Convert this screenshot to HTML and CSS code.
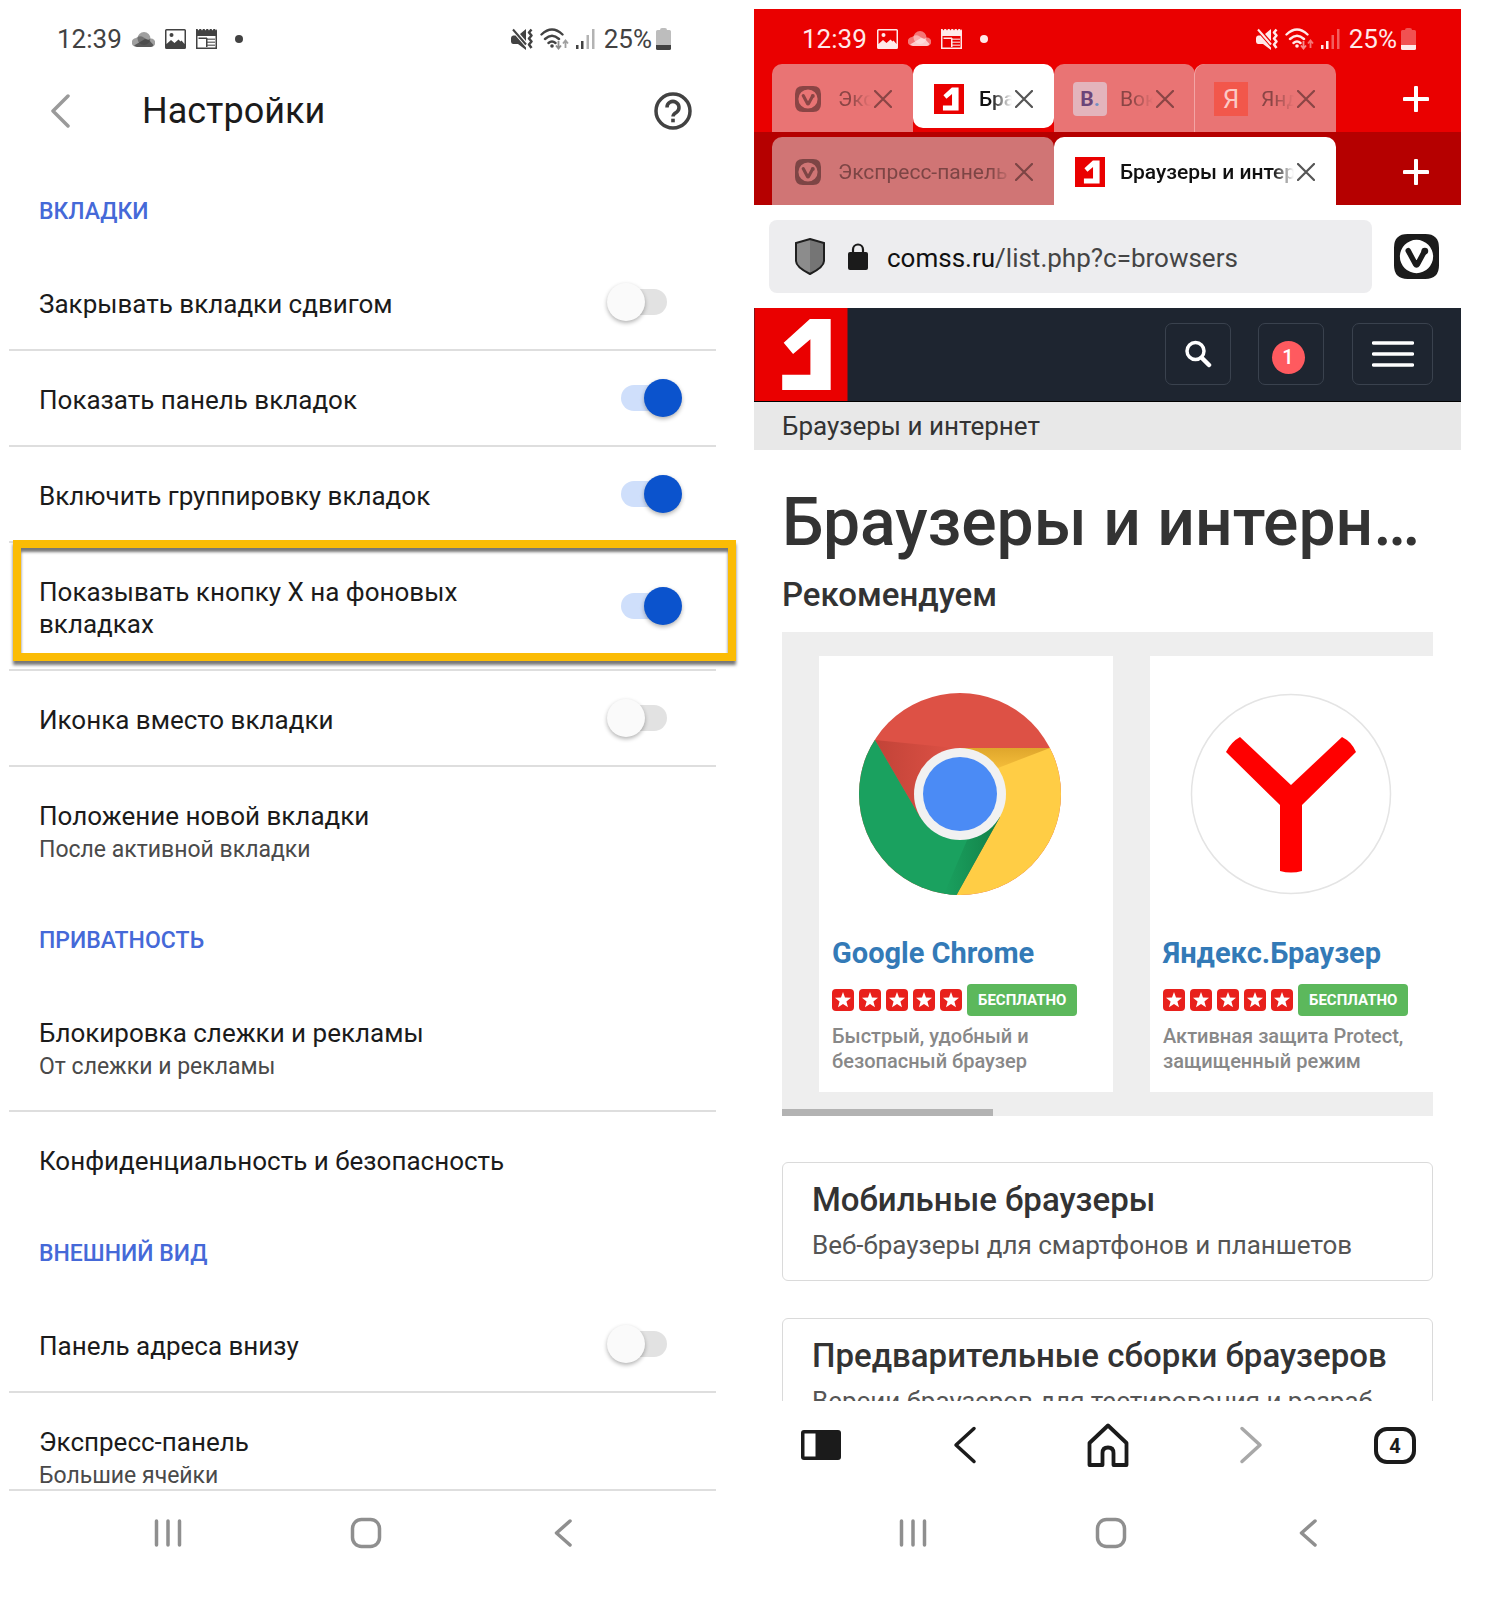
FILE: index.html
```html
<!DOCTYPE html>
<html lang="ru">
<head>
  <meta charset="UTF-8">
  <meta name="viewport" content="width=device-width, initial-scale=1.0">
  <title>Настройки вкладок</title>
  <link rel="stylesheet" href="styles.css">
</head>
<body>

<!-- shared icons -->
<svg class="sprite" aria-hidden="true">
  <symbol id="i-cloud" viewBox="0 0 23 15">
    <circle cx="12" cy="6.500" r="6.500" opacity=".5"/>
    <path d="M4.500 15A4.500 4.500 0 0 1 4 6a6 6 0 0 1 6-1.500L16 8a4 4 0 0 1 3-1.500A4.200 4.200 0 0 1 19 15z" opacity=".5"/>
    <path d="M2 13.500l11-6.500 4 1 4.500 5A4 4 0 0 1 19 15H5z" opacity=".75"/>
  </symbol>
  <symbol id="i-image" viewBox="0 0 21 20">
    <path fill-rule="evenodd" d="M1.500 0h18A1.500 1.500 0 0 1 21 1.500v17a1.500 1.500 0 0 1-1.500 1.500h-18A1.500 1.500 0 0 1 0 18.500v-17A1.500 1.500 0 0 1 1.500 0zM1.500 1.500V15L6 11l3.500 3 4-3.500 2 2 1-1L19.500 15V1.500z"/>
    <circle cx="6.500" cy="6" r="2"/>
  </symbol>
  <symbol id="i-news" viewBox="0 0 21 20">
    <path fill-rule="evenodd" d="M0 0h1.500l1 1.500 1-1.500H5l1 1.500L7 0h1.500l1 1.500 1-1.500H12l1 1.500L14 0h1.500l1 1.500 1-1.500H19l1 1.500 1-1.500v20H0zM1.500 7v11.500h18V7z"/>
    <path d="M2.500 8.500H11V10H2.500zM10 9h1.500v9H10z"/>
    <path d="M11 9.500h8V11h-8zM11 12.500h8V14h-8zM11 15.500h8V17h-8z" opacity=".7"/>
  </symbol>
  <symbol id="i-mute" viewBox="0 0 22 22">
    <path d="M0 10q0-2 2-2.500h2.500L15 19.500V22L7 16H2q-2-.5-2-2.500zM9 6l6-5v12z"/>
    <path d="M2 1.500l13 15" stroke="currentColor" stroke-width="2"/>
    <path d="M20.500 1.500l-2.500 3 2.500 3-2.500 3 2.500 3-2.500 3 2.500 3.500" fill="none" stroke="currentColor" stroke-width="2.500" stroke-linejoin="round"/>
  </symbol>
  <symbol id="i-wifi" viewBox="0 0 29 22">
    <g fill="none" stroke="currentColor" stroke-width="2.400" stroke-linecap="round">
      <path d="M1.500 6.500q10.500-10 21 0M5 11q7-6.500 14 0M8.500 15q3.500-3 7 0"/>
    </g>
    <circle cx="12" cy="18" r="1.800"/>
    <path d="M18.500 13v7M16 17.500l2.500 3 2.500-3" fill="none" stroke="currentColor" stroke-width="1.800" opacity=".6"/>
    <path d="M25.500 20v-7M23 15.500l2.500-3 2.500 3" fill="none" stroke="currentColor" stroke-width="1.800" opacity=".5"/>
  </symbol>
  <symbol id="i-signal" viewBox="0 0 19 20">
    <path d="M0 16h2.500v4H0zM5 12h2.500v8H5z"/>
    <path d="M10.500 6H13v14h-2.500zM16 0h2.500v20H16z" opacity=".4"/>
  </symbol>
  <symbol id="i-battery" viewBox="0 0 15 22">
    <path d="M4 2q0-2 2-2h3q2 0 2 2h2.500q1.500 0 1.500 1.500V17H0V3.500Q0 2 1.500 2z" opacity=".35"/>
    <path d="M0 17h15v3.500q0 1.500-1.500 1.500h-12Q0 22 0 20.500z"/>
  </symbol>
  <symbol id="i-vivaldi" viewBox="0 0 46 46">
    <path fill-rule="evenodd" d="M14 0h18Q46 0 46 14v18Q46 46 32 46H14Q0 46 0 32V14Q0 0 14 0zm9 6a17 17 0 1 0 0 34 17 17 0 0 0 0-34z"/>
    <path d="M14.500 17l7.500 14q1 1.500 2 0l7-13" fill="none" stroke="currentColor" stroke-width="5.500" stroke-linecap="round" stroke-linejoin="round"/>
    <circle cx="31.500" cy="17.500" r="3.500"/>
  </symbol>
  <symbol id="i-comss" viewBox="0 0 94 94">
    <rect width="94" height="94" fill="#ea0000"/>
    <path fill="#fff" d="M56 11h21v72H28V67.500h28.500V31.500L39 46.500 29.500 35z"/>
  </symbol>
  <symbol id="i-close" viewBox="0 0 18 18">
    <path d="M1 1l16 16M17 1L1 17" fill="none" stroke="currentColor" stroke-width="2.200" stroke-linecap="round"/>
  </symbol>
  <symbol id="i-plus" viewBox="0 0 26 26">
    <path d="M13 1.500v23M1.500 13h23" fill="none" stroke="currentColor" stroke-width="4" stroke-linecap="round"/>
  </symbol>
  <symbol id="i-recents" viewBox="0 0 32 32">
    <path d="M4.500 4v24M16 4v24M27.500 4v24" fill="none" stroke="currentColor" stroke-width="3.500" stroke-linecap="round"/>
  </symbol>
  <symbol id="i-home" viewBox="0 0 32 32">
    <rect x="2.500" y="2.500" width="27" height="27" rx="9" fill="none" stroke="currentColor" stroke-width="3.500"/>
  </symbol>
  <symbol id="i-back" viewBox="0 0 32 32">
    <path d="M23 4L9.500 16 23 28" fill="none" stroke="currentColor" stroke-width="3.500" stroke-linecap="round" stroke-linejoin="round"/>
  </symbol>
  <symbol id="i-star" viewBox="0 0 22 22">
    <rect width="22" height="22" rx="4" fill="#e8201c"/>
    <path fill="#fff" d="M11 3l2 5.500 6 .3-4.600 3.700 1.600 5.700-5-3.300-5 3.300 1.600-5.700L3 8.800l6-.3z"/>
  </symbol>
</svg>

<div class="phones">

  <section class="phone settings">
    <div class="status">
      <span class="status-time">12:39</span>
      <svg width="23" height="15"><use href="#i-cloud"/></svg>
      <svg width="21" height="20"><use href="#i-image"/></svg>
      <svg width="21" height="20"><use href="#i-news"/></svg>
      <span class="status-dot"></span>
      <span class="status-right">
        <svg width="22" height="22"><use href="#i-mute"/></svg>
        <svg width="29" height="22"><use href="#i-wifi"/></svg>
        <svg width="19" height="20"><use href="#i-signal"/></svg>
        <span class="status-charge">25%</span>
        <svg width="15" height="22"><use href="#i-battery"/></svg>
      </span>
    </div>

    <header class="head">
      <button class="head-back" aria-label="Назад">
        <svg width="20" height="34" viewBox="0 0 20 34"><path d="M18 2L3 17l15 15" fill="none" stroke="#9a9a9a" stroke-width="3.500" stroke-linecap="round" stroke-linejoin="round"/></svg>
      </button>
      <h1 class="head-title">Настройки</h1>
      <button class="head-help" aria-label="Справка">
        <svg width="38" height="38" viewBox="0 0 38 38">
          <g fill="none" stroke="#424242">
            <circle cx="19" cy="19" r="17" stroke-width="3.500"/>
            <path d="M13 15.500a6 6 0 1 1 9.500 4.800Q19 22.500 19 24.500" stroke-width="3.500"/>
            <path d="M17.200 28.500h3.600" stroke-width="3.600"/>
          </g>
        </svg>
      </button>
    </header>

    <div class="list">
      <h2 class="group">ВКЛАДКИ</h2>
      <label class="row">
        <span class="row-text">Закрывать вкладки сдвигом</span>
        <input class="switch" type="checkbox">
      </label>
      <label class="row">
        <span class="row-text">Показать панель вкладок</span>
        <input class="switch" type="checkbox" checked>
      </label>
      <label class="row">
        <span class="row-text">Включить группировку вкладок</span>
        <input class="switch" type="checkbox" checked>
      </label>
      <label class="row marked">
        <span class="row-text">Показывать кнопку X на фоновых вкладках</span>
        <input class="switch" type="checkbox" checked>
      </label>
      <label class="row">
        <span class="row-text">Иконка вместо вкладки</span>
        <input class="switch" type="checkbox">
      </label>
      <a href="#" class="row last">
        <span class="row-text">Положение новой вкладки<small>После активной вкладки</small></span>
      </a>

      <h2 class="group">ПРИВАТНОСТЬ</h2>
      <a href="#" class="row">
        <span class="row-text">Блокировка слежки и рекламы<small>От слежки и рекламы</small></span>
      </a>
      <a href="#" class="row last">
        <span class="row-text">Конфиденциальность и безопасность</span>
      </a>

      <h2 class="group">ВНЕШНИЙ ВИД</h2>
      <label class="row">
        <span class="row-text">Панель адреса внизу</span>
        <input class="switch" type="checkbox">
      </label>
      <a href="#" class="row">
        <span class="row-text">Экспресс-панель<small>Большие ячейки</small></span>
      </a>
    </div>

    <nav class="sysnav">
      <button aria-label="Недавние"><svg width="32" height="32"><use href="#i-recents"/></svg></button>
      <button aria-label="Домой"><svg width="32" height="32"><use href="#i-home"/></svg></button>
      <button aria-label="Назад"><svg width="32" height="32"><use href="#i-back"/></svg></button>
    </nav>
  </section>

  <section class="phone browser">
    <div class="status status-red">
      <span class="status-time">12:39</span>
      <svg width="21" height="20"><use href="#i-image"/></svg>
      <svg width="23" height="15"><use href="#i-cloud"/></svg>
      <svg width="21" height="20"><use href="#i-news"/></svg>
      <span class="status-dot"></span>
      <span class="status-right">
        <svg width="22" height="22"><use href="#i-mute"/></svg>
        <svg width="29" height="22"><use href="#i-wifi"/></svg>
        <svg width="19" height="20"><use href="#i-signal"/></svg>
        <span class="status-charge">25%</span>
        <svg width="15" height="22"><use href="#i-battery"/></svg>
      </span>
    </div>

    <div class="tabs">
      <div class="tab">
        <span class="fav"><svg width="26" height="26"><use href="#i-vivaldi"/></svg></span>
        <span class="tab-title">Экспресс-панель</span>
        <button class="tab-close" aria-label="Закрыть"><svg width="18" height="18"><use href="#i-close"/></svg></button>
      </div>
      <div class="tab active">
        <span class="fav"><svg width="30" height="30"><use href="#i-comss"/></svg></span>
        <span class="tab-title">Браузеры и интернет</span>
        <button class="tab-close" aria-label="Закрыть"><svg width="18" height="18"><use href="#i-close"/></svg></button>
      </div>
      <div class="tab">
        <span class="fav fav-b">B<i>.</i></span>
        <span class="tab-title">Вокруг</span>
        <button class="tab-close" aria-label="Закрыть"><svg width="18" height="18"><use href="#i-close"/></svg></button>
      </div>
      <div class="tab split">
        <span class="fav fav-ya">Я</span>
        <span class="tab-title">Яндекс</span>
        <button class="tab-close" aria-label="Закрыть"><svg width="18" height="18"><use href="#i-close"/></svg></button>
      </div>
      <button class="tab-add" aria-label="Новая вкладка"><svg width="26" height="26"><use href="#i-plus"/></svg></button>
    </div>

    <div class="tabs tabs-sub">
      <div class="tab">
        <span class="fav"><svg width="26" height="26"><use href="#i-vivaldi"/></svg></span>
        <span class="tab-title">Экспресс-панель</span>
        <button class="tab-close" aria-label="Закрыть"><svg width="18" height="18"><use href="#i-close"/></svg></button>
      </div>
      <div class="tab active">
        <span class="fav"><svg width="30" height="30"><use href="#i-comss"/></svg></span>
        <span class="tab-title">Браузеры и интернет</span>
        <button class="tab-close" aria-label="Закрыть"><svg width="18" height="18"><use href="#i-close"/></svg></button>
      </div>
      <button class="tab-add" aria-label="Новая вкладка"><svg width="26" height="26"><use href="#i-plus"/></svg></button>
    </div>

    <div class="address">
      <a href="#" class="url">
        <svg width="30" height="37" viewBox="0 0 30 37">
          <path d="M15 1l14 4v18q0 6-14 13Q1 29 1 23V5z" fill="#757575"/>
          <path d="M15 1L1 5v18q0 6 14 13z" fill="#8c8c8c"/>
          <path d="M15 1l14 4v18q0 6-14 13Q1 29 1 23V5z" fill="none" stroke="#1f1f1f" stroke-width="2"/>
        </svg>
        <svg width="20" height="27" viewBox="0 0 20 27">
          <rect y="9" width="20" height="18" rx="2" fill="#1b1b1b"/>
          <path d="M5 10V6.500a5 5 0 0 1 10 0V10" fill="none" stroke="#1b1b1b" stroke-width="2.200"/>
        </svg>
        <span class="url-text">comss.ru<span>/list.php?c=browsers</span></span>
      </a>
      <button class="vivaldi" aria-label="Меню Vivaldi"><svg width="45" height="45"><use href="#i-vivaldi"/></svg></button>
    </div>

    <main class="site">
      <header class="site-head">
        <a href="#" class="site-logo" aria-label="Comss"><svg width="94" height="94"><use href="#i-comss"/></svg></a>
        <button class="site-btn" aria-label="Поиск">
          <svg width="28" height="28" viewBox="0 0 28 28"><g fill="none" stroke="#fff" stroke-linecap="round"><circle cx="11.500" cy="11" r="8.500" stroke-width="3.500"/><path d="M18.500 18.500l6.500 6.500" stroke-width="4.500"/></g></svg>
        </button>
        <button class="site-btn"><span class="site-badge">1</span></button>
        <button class="site-btn site-menu" aria-label="Меню">
          <svg width="42" height="26" viewBox="0 0 42 26"><path d="M1.500 2h39M1.500 13h39M1.500 24h39" stroke="#fff" stroke-width="3.500" stroke-linecap="round"/></svg>
        </button>
      </header>
      <div class="crumbs">Браузеры и интернет</div>

      <div class="content">
        <h1 class="page-title">Браузеры и интернет</h1>
        <h2 class="page-sub">Рекомендуем</h2>

        <div class="carousel">
          <article class="app">
            <svg class="app-icon" width="204" height="204" viewBox="-102 -102 204 204">
              <defs>
                <clipPath id="disc"><circle r="101"/></clipPath>
                <linearGradient id="redShade" x1="0" y1="0" x2="1" y2="0"><stop offset="0" stop-color="#b03a2f" stop-opacity=".6"/><stop offset="1" stop-color="#b03a2f" stop-opacity="0"/></linearGradient>
                <linearGradient id="greenShade" x1="1" y1="0" x2="0" y2="0"><stop offset="0" stop-color="#138048"/><stop offset="1" stop-color="#1aa15f"/></linearGradient>
                <linearGradient id="yellowShade" x1="0" y1="0" x2="0" y2="1"><stop offset="0" stop-color="#dfa62c"/><stop offset="1" stop-color="#f4bd3a"/></linearGradient>
              </defs>
              <g clip-path="url(#disc)">
                <rect x="-102" y="-102" width="204" height="204" fill="#dd5145"/>
                <path d="M-85-54L-40 23-46 0-5-46z" fill="url(#redShade)"/>
                <path d="M-102-102L-85-54-40 23 0 46 40 23-4 102h-98z" fill="#1aa15f"/>
                <path d="M0-46h102V102H-4L40 23z" fill="#ffcd45"/>
                <path d="M40 23L-4 102l-12-2 24-56z" fill="url(#greenShade)"/>
                <path d="M0-46h90L38-26z" fill="url(#yellowShade)"/>
              </g>
              <circle r="46" fill="#f1f1f1"/>
              <circle r="37" fill="#4b8bf5"/>
            </svg>
            <h3 class="app-name"><a href="#">Google Chrome</a></h3>
            <div class="app-rate">
              <svg width="22" height="22"><use href="#i-star"/></svg>
              <svg width="22" height="22"><use href="#i-star"/></svg>
              <svg width="22" height="22"><use href="#i-star"/></svg>
              <svg width="22" height="22"><use href="#i-star"/></svg>
              <svg width="22" height="22"><use href="#i-star"/></svg>
              <span class="app-price">БЕСПЛАТНО</span>
            </div>
            <p class="app-desc">Быстрый, удобный и безопасный браузер</p>
          </article>
          <article class="app">
            <svg class="app-icon" width="204" height="204" viewBox="-102 -102 204 204">
              <circle r="99.500" fill="#fff" stroke="#e4e4e4" stroke-width="1.500"/>
              <path fill="red" d="M-51-57L0-9 51-57Q61-52 65-42L11 11V77Q0 80-11 77V11L-65-42Q-60-52-51-57z"/>
            </svg>
            <h3 class="app-name"><a href="#">Яндекс.Браузер</a></h3>
            <div class="app-rate">
              <svg width="22" height="22"><use href="#i-star"/></svg>
              <svg width="22" height="22"><use href="#i-star"/></svg>
              <svg width="22" height="22"><use href="#i-star"/></svg>
              <svg width="22" height="22"><use href="#i-star"/></svg>
              <svg width="22" height="22"><use href="#i-star"/></svg>
              <span class="app-price">БЕСПЛАТНО</span>
            </div>
            <p class="app-desc">Активная защита Protect, защищенный режим</p>
          </article>
          <div class="carousel-bar"></div>
        </div>

        <a href="#" class="topic">
          <h3>Мобильные браузеры</h3>
          <p>Веб-браузеры для смартфонов и планшетов</p>
        </a>
        <a href="#" class="topic">
          <h3>Предварительные сборки браузеров</h3>
          <p>Версии браузеров для тестирования и разработчиков</p>
        </a>
      </div>
    </main>

    <nav class="toolbar">
      <button aria-label="Панель">
        <svg width="42" height="42" viewBox="0 0 42 42"><rect x="1" y="6" width="40" height="30" rx="3" fill="#1b1b1b"/><rect x="4.500" y="9.500" width="11" height="23" fill="#fff"/></svg>
      </button>
      <button aria-label="Назад">
        <svg width="42" height="42" viewBox="0 0 42 42"><path d="M30 4.500L12 21l18 16.500" fill="none" stroke="#1b1b1b" stroke-width="3.500" stroke-linecap="round" stroke-linejoin="round"/></svg>
      </button>
      <button aria-label="Домой">
        <svg width="42" height="44" viewBox="0 0 42 44"><path d="M21 2.500L39.500 20v22H26.500V30q0-5.500-5.500-5.500t-5.500 5.500v12H2.500V20z" fill="none" stroke="#1b1b1b" stroke-width="3.800" stroke-linejoin="round"/></svg>
      </button>
      <button aria-label="Вперёд">
        <svg width="42" height="42" viewBox="0 0 42 42"><path d="M11 4.500L29 21 11 37.500" fill="none" stroke="#a8a8a8" stroke-width="3.500" stroke-linecap="round" stroke-linejoin="round"/></svg>
      </button>
      <button class="tab-count">4</button>
    </nav>

    <nav class="sysnav">
      <button aria-label="Недавние"><svg width="32" height="32"><use href="#i-recents"/></svg></button>
      <button aria-label="Домой"><svg width="32" height="32"><use href="#i-home"/></svg></button>
      <button aria-label="Назад"><svg width="32" height="32"><use href="#i-back"/></svg></button>
    </nav>
  </section>

</div>

</body>
</html>
```
FILE: styles.css
```css
* { margin:0; padding:0; box-sizing:border-box; }

body { background:#fff; color:#1b1b1b; font-family:Roboto, "Noto Sans", sans-serif; font-size:26px; line-height:32px; }

button { border:0; background:none; font:inherit; color:inherit; cursor:pointer; }
a { color:inherit; text-decoration:none; }
svg { display:block; flex:none; fill:currentColor; }
.sprite { position:absolute; width:0; height:0; }

.phones { display:grid; grid-template-columns:minmax(0, 1fr) minmax(0, 1fr); gap:38px; height:100vh; padding:9px 39px 22px 9px; }
.phone { display:flex; flex-direction:column; min-width:0; min-height:0; }

/* status bar */
.status { display:flex; align-items:center; flex:none; height:60px; padding:0 45px 0 48px; gap:10px; color:#424242; }
.status-dot { width:8px; height:8px; margin-left:8px; border-radius:50%; background:currentColor; }
.status-right { display:flex; align-items:center; gap:7px; margin-left:auto; }
.status-charge { margin:0 -3px 0 2px; }
.status-red { height:55px; padding-top:4px; background:#ea0000; color:#ffe9e9; }

/* settings */
.head { display:flex; align-items:center; flex:none; height:84px; margin-bottom:13px; padding:0 24px 0 41px; }
.head-title { flex:1; margin-left:72px; font-size:36px; font-weight:400; line-height:44px; }

/* the marked row sticks out at the sides, only the bottom is cut */
.list { flex:1; min-height:0; overflow-x:visible; overflow-y:clip; border-bottom:2px solid #dedede; }
.group { padding:32px 30px 29px; color:#4569d8; font-size:23px; font-weight:500; line-height:28px; }

.row { display:flex; align-items:center; position:relative; padding-right:34px; border-bottom:2px solid #dedede; }
.row.last { border-color:transparent; }
.row-text { flex:1; padding:33px 80px 29px 30px; }
.row-text small { display:block; margin:2px 0 -2px; color:#4a4a4a; font-size:23px; }

.marked::after { content:""; position:absolute; inset:-3px -20px 8px 4px; border:8px solid #fbbc05; box-shadow:0 4px 3px #777, inset 0 4px 3px #777; z-index:1; }

.switch { appearance:none; position:relative; flex:none; width:75px; height:38px; }
.switch::before { content:""; position:absolute; left:14px; top:6px; width:46px; height:26px; border-radius:13px; background:#e2e2e2; }
.switch::after { content:""; position:absolute; left:0; top:0; width:38px; height:38px; border-radius:50%; background:#fafafa; box-shadow:0 2px 4px rgba(0,0,0,.3); }
.switch:checked::before { background:#cfdffb; }
.switch:checked::after { left:37px; background:#0b53cd; }

.sysnav { display:flex; justify-content:space-between; align-items:center; flex:none; height:84px; padding:0 137px 0 143px; color:#8f8f8f; }

/* tab strips */
.tabs { display:flex; align-items:stretch; flex:none; height:68px; padding:0 24px 0 18px; background:#ea0000; }
.tab { display:flex; align-items:center; flex:1; min-width:0; padding:2px 21px 0 19px; border-radius:10px 10px 0 0; background:#e97474; color:#8a4545; font-size:22px; }
.tab.active { margin-bottom:4px; padding-top:6px; border-radius:10px; background:#fff; color:#111; }
.tab.split { box-shadow:-1px 0 #f3a5a5; }
.tab-title { flex:1; min-width:0; margin-left:13px; overflow:hidden; white-space:nowrap; -webkit-mask-image:linear-gradient(to right, #000 calc(100% - 24px), transparent calc(100% - 3px)); mask-image:linear-gradient(to right, #000 calc(100% - 24px), transparent calc(100% - 3px)); }
.tab.active .tab-close { color:#555; }
.tab-add { display:flex; justify-content:center; align-items:center; flex:none; width:42px; margin-left:59px; padding-top:2px; color:#fff; }

.tabs-sub { height:73px; padding-top:5px; background:#b50000; }
.tabs-sub .tab { background:#d07575; color:#7d4545; }
.tabs-sub .tab.active { margin-bottom:0; padding-top:2px; border-radius:10px 10px 0 0; background:#fff; color:#111; }

.tab, .tabs-sub .tab { font-size:21px; }
.tab.active { font-weight:500; }

.fav { display:flex; justify-content:center; align-items:center; flex:none; width:34px; height:34px; border-radius:4px; font-weight:700; }
.fav-b { background:#e3b4bc; color:#6b4579; }
.fav-b i { color:#6f8fc4; font-style:normal; }
.tab .fav-ya { border-radius:0; background:#f2574b; color:#fbc9c5; font-size:26px; font-weight:400; }

/* address bar */
.address { display:flex; align-items:center; flex:none; height:103px; padding:0 22px 0 15px; }
.url { display:flex; align-items:center; flex:1; height:73px; padding-left:26px; border-radius:8px; background:#ededef; }
.url svg + svg { margin-left:23px; }
.url-text { margin:2px 0 0 19px; color:#111; }
.url-text span { color:#444; }
.vivaldi { margin-left:22px; color:#1b1b1b; }

/* site */
.site { flex:1; min-height:0; overflow:hidden; color:#333; }
.site-head { display:flex; align-items:center; height:94px; padding-right:28px; border-bottom:1px solid #000; background:#1e2530; }
.site-logo { margin-right:auto; }
.site-logo svg { height:93px; }
.site-btn { display:flex; justify-content:center; align-items:center; width:66px; height:62px; margin:0 0 2px 27px; border:1px solid #3a424e; border-radius:7px; }
.site-menu { width:81px; margin-left:28px; }
.site-badge { width:33px; height:33px; margin:8px 6px 0 0; border-radius:50%; background:#ff5a5f; color:#fff; font-size:20px; font-weight:500; line-height:33px; }
.crumbs { padding:8px 28px; background:#e8e8e8; }

.content { padding:33px 28px 0; }
.page-title { overflow:hidden; font-size:66px; font-weight:500; line-height:80px; white-space:nowrap; text-overflow:ellipsis; }
.page-sub { margin:12px 0 17px; font-size:33px; font-weight:500; line-height:40px; }

.carousel { display:flex; gap:37px; position:relative; padding:24px 0 24px 37px; overflow:hidden; background:#eee; }
.carousel-bar { position:absolute; left:0; bottom:0; width:211px; height:7px; background:#b3b3b3; }
.app { flex:none; width:294px; padding:36px 13px 18px; background:#fff; }
.app-icon { margin-left:26px; }
.app-name { margin-top:39px; color:#337ab7; font-size:29px; font-weight:700; line-height:36px; }
.app-rate { display:flex; align-items:center; gap:5px; height:32px; margin-top:13px; }
.app-price { height:32px; padding:0 11px; border-radius:4px; background:#5cb85c; color:#fff; font-size:15px; font-weight:700; line-height:33px; }
.app-desc { margin-top:8px; color:#888; font-size:20px; font-weight:500; line-height:25px; }

.topic { display:block; margin-top:46px; padding:17px 29px 19px; border:1px solid #dadada; border-radius:6px; }
.topic + .topic { margin-top:37px; }
.topic h3 { font-size:33px; font-weight:500; line-height:40px; white-space:nowrap; }
.topic p { margin-top:9px; overflow:hidden; color:#555; white-space:nowrap; text-overflow:ellipsis; }

.toolbar { display:flex; justify-content:space-between; align-items:center; flex:none; height:90px; padding:0 45px 2px 46px; }
.tab-count { width:42px; height:37px; border:4px solid #1b1b1b; border-radius:13px; font-size:20px; font-weight:700; line-height:30px; }
```
